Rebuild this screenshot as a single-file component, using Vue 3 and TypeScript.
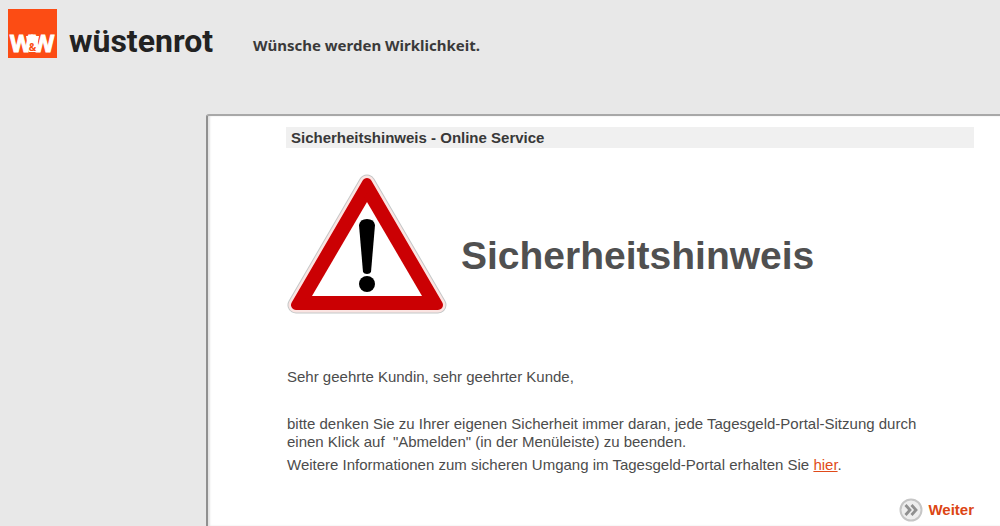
<script setup lang="ts">
const title: string = 'Sicherheitshinweis - Online Service'
const heading: string = 'Sicherheitshinweis'
const slogan: string = 'Wünsche werden Wirklichkeit.'
</script>

<template>
  <div class="page">
    <header class="header">
      <a class="brand" href="#">
        <svg class="mark" viewBox="0 0 49 49" role="img" aria-label="W&amp;W">
          <rect width="49" height="49" fill="#fc4c14" />
          <text class="mark-w" x="2" y="43">W</text>
          <text class="mark-w" x="24" y="43">W</text>
          <path d="M18 27 H31 L28 43 H21 Z" fill="#fff" />
          <text class="mark-amp" x="24.5" y="42" text-anchor="middle">&amp;</text>
        </svg>
        <span class="wordmark">wüstenrot</span>
      </a>
      <p class="slogan">{{ slogan }}</p>
    </header>

    <main class="panel">
      <h1 class="title">{{ title }}</h1>

      <section class="hero">
        <svg class="warning" viewBox="0 0 160 140" aria-hidden="true">
          <path d="M80 9 L9 131 H151 Z" fill="#c4c8c8" stroke="#c4c8c8" stroke-width="17" stroke-linejoin="round" />
          <path d="M80 9 L9 131 H151 Z" fill="#fbe4e2" stroke="#fbe4e2" stroke-width="15" stroke-linejoin="round" />
          <path d="M80 9 L9 131 H151 Z" fill="#cb0003" stroke="#cb0003" stroke-width="10" stroke-linejoin="round" />
          <path d="M80 28 L25 122 H135 Z" fill="#fff" />
          <path d="M72 51 Q73 45 80 45 Q87 45 88 51 L84 98 Q83 100 80 100 Q77 100 76 98 Z" fill="#000" />
          <circle cx="80" cy="110" r="8" fill="#000" />
        </svg>
        <h2 class="heading">{{ heading }}</h2>
      </section>

      <p class="greeting">Sehr geehrte Kundin, sehr geehrter Kunde,</p>
      <p class="notice">
        bitte denken Sie zu Ihrer eigenen Sicherheit immer daran, jede Tagesgeld-Portal-Sitzung durch einen Klick auf&nbsp; "Abmelden" (in der Menüleiste) zu beenden.
      </p>
      <p class="more">
        Weitere Informationen zum sicheren Umgang im Tagesgeld-Portal erhalten Sie <a href="#">hier</a>.
      </p>

      <nav class="actions">
        <a class="next" href="#">
          <svg class="next-icon" viewBox="0 0 24 24" aria-hidden="true">
            <circle cx="12" cy="12" r="10.5" fill="#eee" stroke="#c6c6c6" stroke-width="2" />
            <path d="M6.5 7 L11 12 L6.5 17 M12.5 7 L17 12 L12.5 17" fill="none" stroke="#909090" stroke-width="2.8" />
          </svg>
          <span>Weiter</span>
        </a>
      </nav>
    </main>
  </div>
</template>

<style>
body {
  margin: 0;
  background: #e8e8e8;
}
</style>

<style scoped>
.page {
  display: flex;
  flex-direction: column;
  min-height: 100vh;
  box-sizing: border-box;
  background: #e8e8e8;
  color: #4c4c4c;
  font-family: "Liberation Sans", Arial, sans-serif;
  font-size: 15px;
  line-height: 18px;
}

h1,
h2,
p {
  margin: 0;
}

.header {
  display: flex;
  align-items: flex-start;
  gap: 40px;
  padding: 9px 8px 0;
  height: 105px;
}

.brand {
  display: flex;
  gap: 12px;
  color: #222;
  text-decoration: none;
}

.mark {
  width: 49px;
  height: 49px;
}

.mark-w {
  fill: #fff;
  stroke: #fff;
  stroke-width: 1px;
  font: 700 23px "Noto Sans", sans-serif;
}

.mark-amp {
  fill: #fc4c14;
  font: 700 10px "Noto Sans", sans-serif;
}

.wordmark {
  padding-top: 12px;
  font: 700 32px/40px Roboto, sans-serif;
}

.slogan {
  padding-top: 24px;
  color: #3a3a3a;
  font: 700 15px/24px "Noto Sans", sans-serif;
}

.panel {
  flex: 1;
  margin-left: 206px;
  padding: 11px 26px 3px 78px;
  border-top: 2px solid #a8a8a8;
  border-left: 2px solid #909090;
  border-top-left-radius: 3px;
  background: #fff;
  box-shadow: inset 2px 0 2px #e4e4e4;
}

.title {
  padding: 2px 5px 1px;
  background: #f0f0f0;
  color: #383838;
  font-size: 15px;
  line-height: 18px;
}

.hero {
  display: flex;
  align-items: center;
  gap: 14px;
  padding: 26px 0 0 1px;
}

.warning {
  width: 160px;
  height: 140px;
}

.heading {
  padding-top: 24px;
  color: #505050;
  font-size: 39px;
  line-height: 48px;
}

.greeting {
  padding: 54px 0 0 1px;
}

.notice {
  max-width: 650px;
  padding: 29px 0 0 1px;
}

.more {
  padding: 5px 0 0 1px;
}

.more a {
  color: #e04a1a;
}

.actions {
  display: flex;
  justify-content: flex-end;
  padding-top: 24px;
}

.next {
  display: flex;
  align-items: center;
  gap: 5px;
  color: #dc4614;
  font-size: 15px;
  font-weight: 700;
  text-decoration: none;
}

.next-icon {
  width: 24px;
  height: 24px;
}
</style>
